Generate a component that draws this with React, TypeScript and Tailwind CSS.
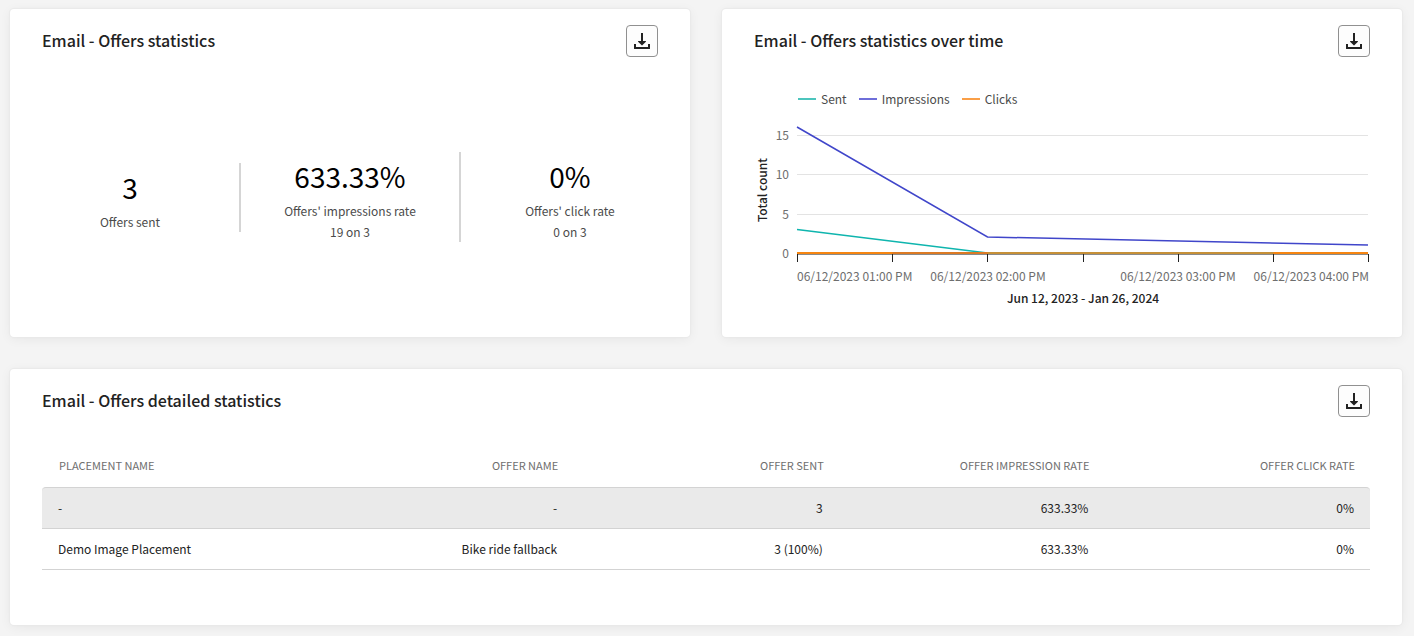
import type { ReactNode } from "react";

function DownloadButton({ label }: { label: string }) {
  return (
    <button
      type="button"
      aria-label={label}
      className="flex size-8 shrink-0 items-center justify-center rounded border border-[#909090] bg-[#fdfdfd] text-[#222222]"
    >
      <svg width="18" height="18" viewBox="0 0 18 18" fill="currentColor" aria-hidden="true">
        <path d="M8 1h2v8h2.6a.4.4 0 0 1 .3.66L9.3 13.3a.4.4 0 0 1-.6 0L5.1 9.66A.4.4 0 0 1 5.4 9H8z" />
        <path d="M1 12h2v3h12v-3h2v4.5a.5.5 0 0 1-.5.5h-15a.5.5 0 0 1-.5-.5z" />
      </svg>
    </button>
  );
}

function Card({ title, className = "", children }: { title: string; className?: string; children: ReactNode }) {
  return (
    <section
      className={`flex min-w-0 flex-col rounded bg-white shadow-[0_0_1px_1px_#e9e9e9,0_2px_12px_rgba(0,0,0,0.06)] ${className}`}
    >
      <header className="flex items-center justify-between px-8 pt-4">
        <h2 className="pb-0.5 text-base font-medium text-[#222222]">{title}</h2>
        <DownloadButton label={`Download ${title}`} />
      </header>
      {children}
    </section>
  );
}

const stats = [
  { value: "3", label: "Offers sent", detail: null },
  { value: "633.33%", label: "Offers' impressions rate", detail: "19 on 3" },
  { value: "0%", label: "Offers' click rate", detail: "0 on 3" },
];

const legend = [
  { name: "Sent", swatch: "bg-[#4cc5bd]" },
  { name: "Impressions", swatch: "bg-[#6e6ed9]" },
  { name: "Clicks", swatch: "bg-[#fa9f47]" },
];

const gridLines = [
  { label: "15", y: 26.5 },
  { label: "10", y: 65.5 },
  { label: "5", y: 105.5 },
];

const ticks = [43.5, 138.5, 233.5, 329.5, 424.5, 519.5, 614.5];

const timeLabels = [
  { x: 43, anchor: "start" as const, text: "06/12/2023 01:00 PM" },
  { x: 234, anchor: "middle" as const, text: "06/12/2023 02:00 PM" },
  { x: 424, anchor: "middle" as const, text: "06/12/2023 03:00 PM" },
  { x: 615, anchor: "end" as const, text: "06/12/2023 04:00 PM" },
];

function OffersChart() {
  return (
    <svg
      viewBox="0 0 616 200"
      className="block h-auto w-full"
      role="img"
      aria-label="Offers statistics over time"
    >
      {gridLines.map((g) => (
        <g key={g.label}>
          <line x1="43" x2="614" y1={g.y} y2={g.y} stroke="#e3e3e3" />
          <text x="35" y={g.y + 4} textAnchor="end" className="fill-[#6e6e6e] text-xs">
            {g.label}
          </text>
        </g>
      ))}
      <text x="35" y="149" textAnchor="end" className="fill-[#6e6e6e] text-xs">
        0
      </text>
      <line x1="43" x2="615" y1="145.5" y2="145.5" stroke="#8a8a8a" />
      {ticks.map((x) => (
        <line key={x} x1={x} x2={x} y1="145" y2="153" stroke="#222222" />
      ))}
      <polyline points="43,120.5 233.5,144 614,144" fill="none" stroke="#0fb5ae" strokeWidth="1.5" />
      <polyline points="43,18 233.5,128 614,136" fill="none" stroke="#4046ca" strokeWidth="1.5" />
      <line x1="43" x2="614" y1="144" y2="144" stroke="#f68511" strokeWidth="2" />
      <line x1="138.5" x2="233.5" y1="144" y2="144" stroke="#dc7a24" strokeWidth="2" />
      <line x1="233.5" x2="519.5" y1="144" y2="144" stroke="#c69038" strokeWidth="2" />
      {timeLabels.map((t) => (
        <text key={t.text} x={t.x} y="172" textAnchor={t.anchor} className="fill-[#6e6e6e] text-xs">
          {t.text}
        </text>
      ))}
      <text x="329" y="194" textAnchor="middle" className="fill-[#222222] text-xs font-medium">
        Jun 12, 2023 - Jan 26, 2024
      </text>
      <text
        x="13"
        y="81"
        textAnchor="middle"
        transform="rotate(-90 13 81)"
        className="fill-[#222222] text-xs font-medium"
      >
        Total count
      </text>
    </svg>
  );
}

const columns = ["Placement name", "Offer name", "Offer sent", "Offer impression rate", "Offer click rate"];

const rows = [
  ["-", "-", "3", "633.33%", "0%"],
  ["Demo Image Placement", "Bike ride fallback", "3 (100%)", "633.33%", "0%"],
];

export default function App() {
  return (
    <main className="flex min-h-screen flex-col gap-8 bg-[#f4f4f4] pt-[9px] pr-3 pb-[11px] pl-2.5 font-['Noto_Sans_CJK_SC','Noto_Sans',sans-serif]">
      <div className="grid grid-cols-2 gap-8">
        <Card title="Email - Offers statistics">
          <div className="grid flex-1 grid-cols-3 items-center pr-[9px] pl-[11px]">
            {stats.map((s) => (
              <div
                key={s.label}
                className="flex flex-col items-center border-r-2 border-[#d5d5d5] text-xs leading-[21px] text-[#4b4b4b] last:border-transparent"
              >
                <span className="text-[28px] leading-[48px] text-black">{s.value}</span>
                <span>{s.label}</span>
                {s.detail && <span>{s.detail}</span>}
              </div>
            ))}
          </div>
        </Card>

        <Card title="Email - Offers statistics over time">
          <div className="px-8 pt-8 pb-7">
            <ul className="flex h-5 items-center gap-3 pl-11 text-xs text-[#4b4b4b]">
              {legend.map((l) => (
                <li key={l.name} className="flex items-center gap-[5px]">
                  <span className={`h-0.5 w-[18px] ${l.swatch}`} />
                  {l.name}
                </li>
              ))}
            </ul>
            <OffersChart />
          </div>
        </Card>
      </div>

      <Card title="Email - Offers detailed statistics" className="flex-1">
        <div className="px-8 pt-7 pb-12">
          <table className="w-full table-fixed border-separate border-spacing-0 text-xs text-[#222222]">
            <thead>
              <tr className="text-[11px] text-[#6e6e6e]">
                {columns.map((c) => (
                  <th
                    key={c}
                    scope="col"
                    className="h-[42px] pr-[15px] pb-0.5 pl-[17px] text-right font-normal uppercase first:text-left"
                  >
                    {c}
                  </th>
                ))}
              </tr>
            </thead>
            <tbody>
              {rows.map((r, i) => (
                <tr key={i} className="group">
                  {r.map((cell, j) => (
                    <td
                      key={j}
                      className="h-[41px] border-b border-[#d3d3d3] px-4 text-right group-first:h-[42px] group-first:border-t group-first:bg-[#eaeaea] first:text-left group-first:first:rounded-tl group-first:last:rounded-tr"
                    >
                      {cell}
                    </td>
                  ))}
                </tr>
              ))}
            </tbody>
          </table>
        </div>
      </Card>
    </main>
  );
}
